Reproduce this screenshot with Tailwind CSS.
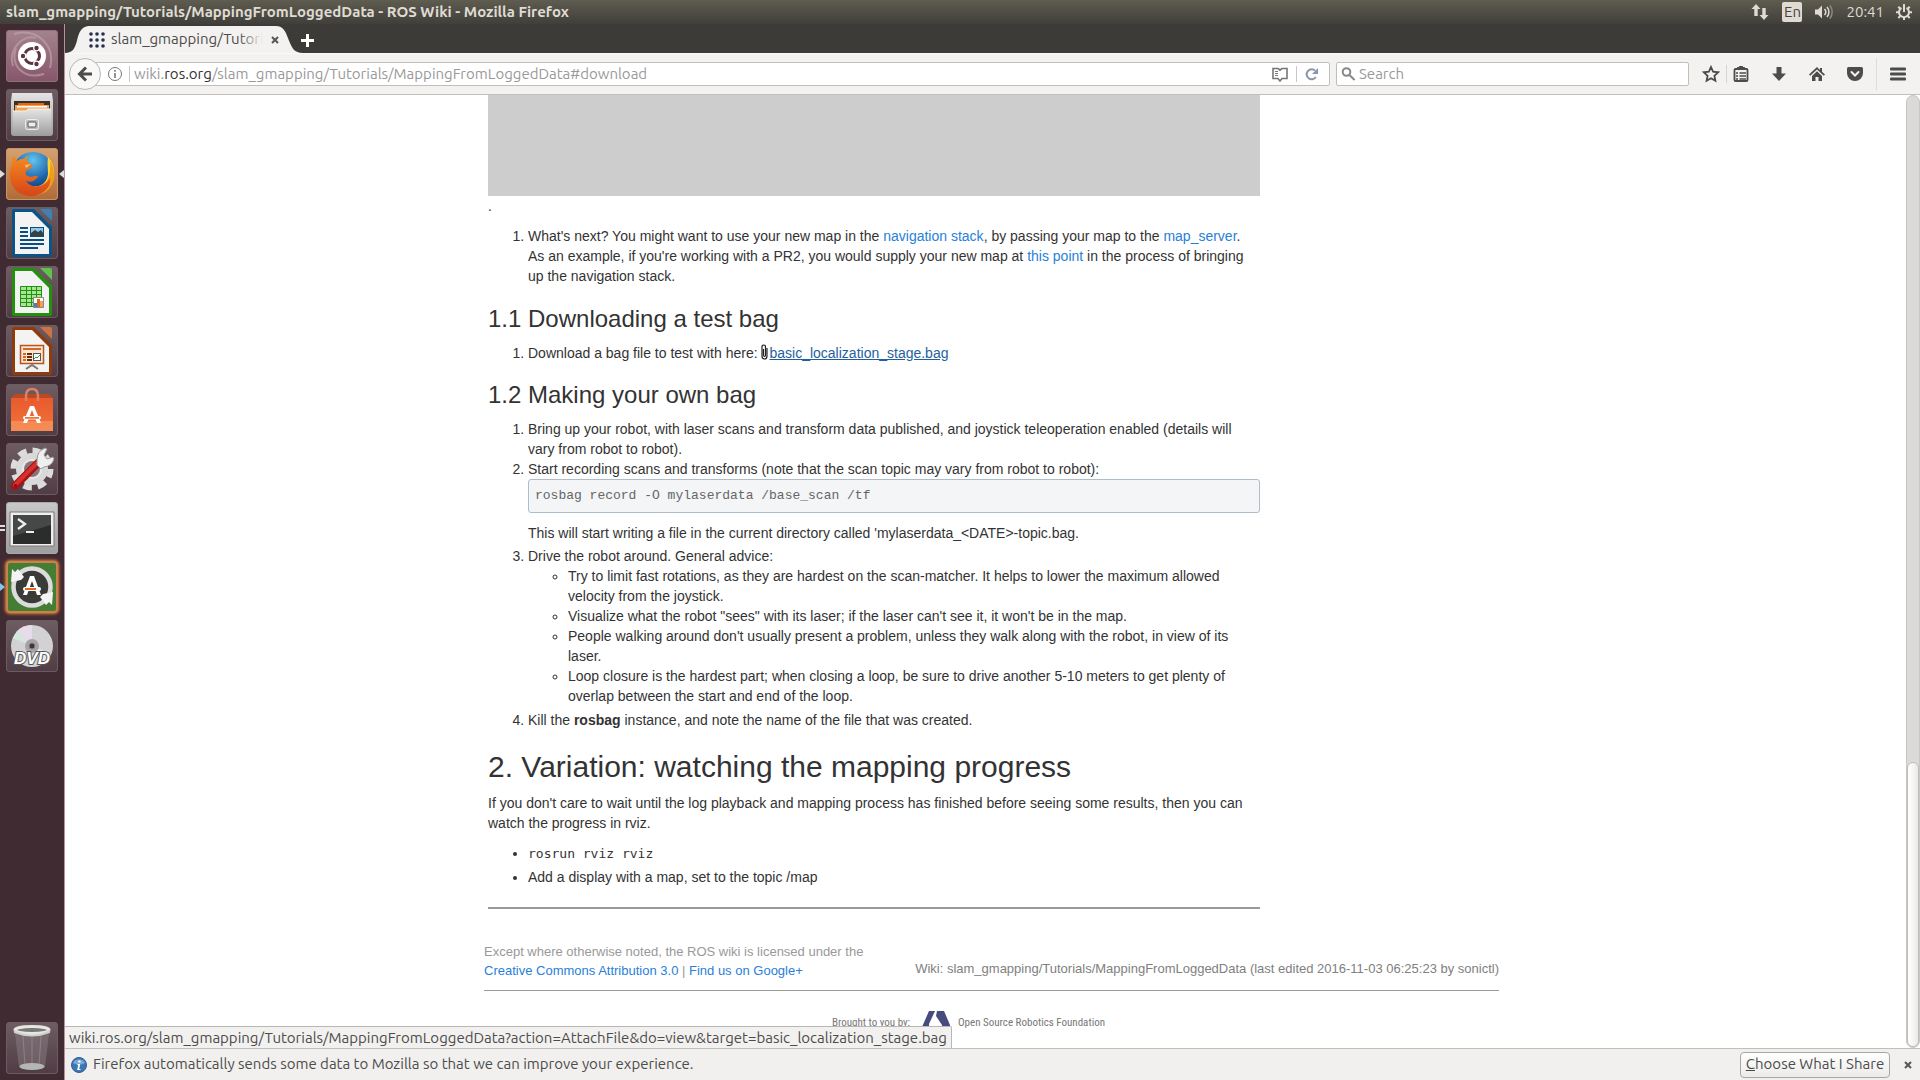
<!DOCTYPE html>
<html lang="en">
<head>
<meta charset="utf-8">
<title>slam_gmapping/Tutorials/MappingFromLoggedData - ROS Wiki</title>
<script src="https://cdn.jsdelivr.net/npm/@tailwindcss/browser@4"></script>
</head>
<body class="flex h-screen flex-col overflow-hidden bg-white font-['Ubuntu','Noto_Sans',sans-serif] text-[15px] text-[#4c4c4c]">

<!-- System panel -->
<header class="flex h-6 shrink-0 items-center justify-between bg-linear-to-b from-[#5f5c50] to-[#403f3a] pr-2 pl-1.5 text-[#dfdbd2]">
  <h1 class="font-bold whitespace-nowrap">slam_gmapping/Tutorials/MappingFromLoggedData - ROS Wiki - Mozilla Firefox</h1>
  <div class="flex items-center gap-3">
    <svg class="h-5 w-5" viewBox="0 0 20 20" fill="#dfdbd2" aria-label="Network"><path d="M6 2 10.500 7H7.700V14H4.300V7H1.500zM14 18 9.500 13H12.300V6H15.700V13H18.500z"/></svg>
    <span class="flex h-5 w-5 items-center justify-center rounded-xs bg-[#dfdbd2] text-[#45443f]">En</span>
    <svg class="h-5 w-5" viewBox="0 0 20 20" fill="none" stroke="#dfdbd2" stroke-width="1.500" aria-label="Sound"><path d="M1 7.500h3l4-4v13l-4-4H1z" fill="#dfdbd2" stroke="none"/><path d="M10.500 7a4.500 4.500 0 0 1 0 6M13 5a7.500 7.500 0 0 1 0 10"/><path d="M15.700 3.200a10.500 10.500 0 0 1 0 13.600" stroke="#8b887f"/></svg>
    <span>20:41</span>
    <svg class="h-4 w-4" viewBox="0 0 16 16" fill="none" stroke="#dfdbd2" stroke-width="2" aria-label="Session"><path d="M5.500 3.900A5 5 0 1 0 10.500 3.900"/><path d="M8 0v8M0 8.300h3M13 8.300h3M2.300 2.800l2 2M13.700 2.800l-2 2M2.300 14l2-2M13.700 14l-2-2M8 13v3"/></svg>
  </div>
</header>

<div class="flex min-h-0 flex-1">

<!-- Launcher -->
<nav class="flex w-[65px] shrink-0 flex-col border-r border-[#b9919c] bg-[#402b33] py-1.5 pl-1.5" aria-label="Launcher">
  <div class="flex flex-1 flex-col gap-[7px]">
    <button aria-label="Dash" class="h-[52px] w-[52px] rounded bg-linear-to-b from-[#a3848e] to-[#86566a] ring-1 ring-[#8f6f7b] ring-inset">
      <svg viewBox="0 0 52 52"><g fill="none" stroke="#c4a7b1" stroke-opacity=".6" stroke-width="2"><path d="M8 4c22-6 42 10 36 34M10 18c-6 18 8 32 28 26M7 36C2 20 16 4 30 8"/></g><circle cx="26" cy="26" r="14" fill="#fff"/><circle cx="26" cy="26" r="7.500" fill="none" stroke="#5b3443" stroke-width="3"/><g fill="#5b3443" stroke="#fff" stroke-width="1.200"><circle cx="17" cy="26" r="2.800"/><circle cx="30.500" cy="18" r="2.800"/><circle cx="30.500" cy="34" r="2.800"/></g></svg>
    </button>
    <button aria-label="Files" class="h-[52px] w-[52px] rounded bg-linear-to-b from-[#6f5d64] to-[#4f3c44] ring-1 ring-[#6d5b62] ring-inset">
      <svg viewBox="0 0 52 52"><defs><linearGradient id="cab" x2="0" y2="1"><stop stop-color="#e4e4e4"/><stop offset="1" stop-color="#9c9c9c"/></linearGradient></defs><path d="M6 4h40l1 8v32q0 3-3 3H8q-3 0-3-3V12z" fill="url(#cab)"/><path d="M8 12h36v12H8z" fill="#39312c"/><path d="M12 14h26v4H12z" fill="#e2661d"/><path d="M9 16h34v6H9z" fill="#f3a24b"/><path d="M11 17h30v1.500H11z" fill="#fff"/><path d="M7 22h13l2-2h23v25q0 2-2 2H9q-2 0-2-2z" fill="url(#cab)"/><path d="M7 22h13l2-2h23" fill="none" stroke="#f2f2f2"/><rect x="19.500" y="30.500" width="13" height="10" rx="2" fill="#b9b9b9" stroke="#eee"/><rect x="22" y="33" width="8" height="5" rx="1" fill="#eee" stroke="#555"/></svg>
    </button>
    <div class="relative">
      <button aria-label="Firefox" class="block h-[52px] w-[52px] rounded bg-linear-to-b from-[#d6a272] to-[#b06b36] ring-1 ring-[#c69469] ring-inset">
        <svg viewBox="0 0 52 52"><defs><radialGradient id="globe" cx=".5" cy=".2" r=".8"><stop stop-color="#62c4ee"/><stop offset=".6" stop-color="#1a5fa8"/><stop offset="1" stop-color="#10305f"/></radialGradient><linearGradient id="fox" x2="0" y2="1"><stop stop-color="#f28b1f"/><stop offset="1" stop-color="#d8441a"/></linearGradient></defs><circle cx="27" cy="25" r="21" fill="url(#globe)"/><path d="M42 9c8 9 8 22 2 30-6 8-18 9-24 5l8-6c8 1 13-4 14-12 0-6-1-11 0-17z" fill="#fbd32c"/><path d="M44 13c6 10 5 20-1 28-4 4-8 5-12 6l4-8c8-5 10-14 9-26z" fill="#f39a1e"/><path d="M6 14c0-3 1-5 2-6l3 5c3-2 5-2 7-2 1-2 3-3 4-3-2 3-1 5 2 8l3 1c-1 3-4 4-6 5-2 2-2 5 1 6 3 2 7-1 10 0-2 5-7 7-12 5 5 8 18 7 24-3 2 9-8 18-19 18C12 48 3 38 4 26c0-5 2-8 2-12z" fill="url(#fox)"/><path d="M19 17l6-1-5 4z" fill="#f6c08c"/></svg>
      </button>
      <svg class="absolute top-[22px] -left-1.5 h-2 w-[5px]" viewBox="0 0 5 8" fill="#dedede"><path d="M0 0 5 4 0 8z"/></svg>
      <svg class="absolute top-[22px] right-0 h-2 w-[5px]" viewBox="0 0 5 8" fill="#dedede"><path d="M5 0 0 4 5 8z"/></svg>
    </div>
    <button aria-label="Writer" class="h-[52px] w-[52px] rounded bg-linear-to-b from-[#6f5d64] to-[#4f3c44] ring-1 ring-[#6d5b62] ring-inset">
      <svg viewBox="0 0 52 52"><path d="M8 2h20l18 18v28q0 2-2 2H8q-2 0-2-2V4q0-2 2-2z" fill="#0b5487"/><path d="M9 5h17l17 17v25H9z" fill="#f3f3f3"/><path d="M34 2h10q2 0 2 2v10z" fill="#3c82b5"/><g fill="#0b4f80"><path d="M14 20h8v2h-8zM14 24h8v2h-8zM14 28h8v2h-8zM14 32h24v2H14zM14 36h24v2H14zM14 40h18v2H14z"/></g><rect x="24.500" y="20.500" width="13" height="9" fill="#8fc8ec" stroke="#0b4f80"/><path d="M25 29v-3l4-3 3 2 3-2 2 3v3z" fill="#36423f"/></svg>
    </button>
    <button aria-label="Calc" class="h-[52px] w-[52px] rounded bg-linear-to-b from-[#6f5d64] to-[#4f3c44] ring-1 ring-[#6d5b62] ring-inset">
      <svg viewBox="0 0 52 52"><path d="M8 2h20l18 18v28q0 2-2 2H8q-2 0-2-2V4q0-2 2-2z" fill="#23900f"/><path d="M9 5h17l17 17v25H9z" fill="#f3f3f3"/><path d="M34 2h10q2 0 2 2v10z" fill="#5ec24c"/><path d="M14.500 20.500h21v20h-21z" fill="#a6e594" stroke="#23900f"/><path d="M14 24.500h22M14 28.500h22M14 32.500h22M14 36.500h22M20.500 20v21M25.500 20v21M30.500 20v21" stroke="#23900f"/><path d="M27.500 31.500h10v10h-10z" fill="#fff" stroke="#888"/><path d="M28 37h3v4h-3z" fill="#3c82c5"/><path d="M31 33h3v8h-3z" fill="#e2661d"/><path d="M34 35h3v6h-3z" fill="#f3a24b"/></svg>
    </button>
    <button aria-label="Impress" class="h-[52px] w-[52px] rounded bg-linear-to-b from-[#6f5d64] to-[#4f3c44] ring-1 ring-[#6d5b62] ring-inset">
      <svg viewBox="0 0 52 52"><path d="M8 2h20l18 18v28q0 2-2 2H8q-2 0-2-2V4q0-2 2-2z" fill="#8f3b0b"/><path d="M9 5h17l17 17v25H9z" fill="#f3f3f3"/><path d="M34 2h10q2 0 2 2v10z" fill="#cc7343"/><path d="M14.500 20.500h23v18h-23z" fill="#fbe6d4" stroke="#b3551c" stroke-width="1.500"/><path d="M17 23h18v2H17z" fill="#d5652a"/><path d="M17 28h3v2h-3zM17 31h3v2h-3zM17 34h3v2h-3z" fill="#d5652a"/><path d="M21 28h5v2h-5zM21 31h5v2h-5zM21 34h5v2h-5z" fill="#6b2a08"/><rect x="27.500" y="28.500" width="7" height="7" fill="#fff" stroke="#555"/><path d="M28 34l2-2 1 1 3-3" stroke="#35a13a" fill="none"/><path d="M20 44l6-4 6 4" fill="none" stroke="#777" stroke-width="2"/></svg>
    </button>
    <button aria-label="Software" class="h-[52px] w-[52px] rounded bg-linear-to-b from-[#6f5d64] to-[#4f3c44] ring-1 ring-[#6d5b62] ring-inset">
      <svg viewBox="0 0 52 52"><defs><linearGradient id="bag" x2="0" y2="1"><stop stop-color="#e9592b"/><stop offset="1" stop-color="#f0753f"/></linearGradient></defs><path d="M5 14l4-4h34l4 4z" fill="#b84a26"/><path d="M5 14h42v33H5z" fill="url(#bag)"/><path d="M5 37h42v10H5z" fill="#f68a55"/><path d="M20 17v-5q0-7 6-7t6 7v5" fill="none" stroke="#d98265" stroke-width="2.500"/><path d="M24 22h4l7 17h-4l-5-13-5 13h-4z" fill="#fff"/><rect x="17" y="32" width="18" height="3.500" rx="1.700" fill="#fff"/><rect x="19" y="33" width="14" height="1.800" fill="#f0753f"/></svg>
    </button>
    <button aria-label="System Settings" class="h-[52px] w-[52px] rounded bg-linear-to-b from-[#6f5d64] to-[#4f3c44] ring-1 ring-[#6d5b62] ring-inset">
      <svg viewBox="0 0 52 52"><circle cx="26" cy="26" r="18.500" fill="none" stroke="#dcdcdc" stroke-width="6" stroke-dasharray="8.500 6.030"/><circle cx="26" cy="26" r="13" fill="#e9e9e9" stroke="#d9d9d9" stroke-width="6"/><circle cx="26" cy="26" r="8" fill="#86777d"/><path d="M9 43 32 20" stroke="#a51515" stroke-width="8" stroke-linecap="round"/><path d="M9 42 31 20" stroke="#d8302d" stroke-width="4" stroke-linecap="round"/><circle cx="9.500" cy="42.500" r="1.500" fill="#701010"/><path d="M31 17q0-9 8-12l2 1-3 6 3 4 6-2 1 2q-2 7-10 8l-3 2-4-4z" fill="#efefef" stroke="#999"/></svg>
    </button>
    <div class="relative">
      <button aria-label="Terminal" class="block h-[52px] w-[52px] rounded bg-linear-to-b from-[#c9c9c9] to-[#9d9d9d] ring-1 ring-[#a9a9a9] ring-inset">
        <svg viewBox="0 0 52 52"><path d="M4 10h44v34H4z" fill="#efefef" stroke="#777"/><path d="M7 13h38v29H7z" fill="#2b2d2c"/><path d="M7 13h38v10L7 34z" fill="#454847"/><path d="M12 17l7 5-7 5" fill="none" stroke="#eee" stroke-width="2.300"/><path d="M20 29h8v2h-8z" fill="#eee"/></svg>
      </button>
      <svg class="absolute top-[22px] -left-1.5 h-2 w-[5px]" viewBox="0 0 5 8" fill="#dedede"><path d="M0 1h5v2H0zM0 5h5v2H0z"/></svg>
    </div>
    <div class="relative">
      <button aria-label="Software Updater" class="block h-[52px] w-[52px] rounded bg-[#447d33] shadow-[0_0_3px_1px_#e8803c] ring-2 ring-[#c9824a] ring-inset">
        <svg viewBox="0 0 52 52"><circle cx="26" cy="26" r="17" fill="#3a3a38"/><circle cx="26" cy="26" r="18.500" fill="none" stroke="#dcdcdc" stroke-width="4.500"/><path d="M5 21 6 8l3 3 3-3 6 8-3 3zM47 31l-1 13-3-3-3 3-6-8 3-3z" fill="#f4f4f4"/><path d="M24 15h4l7 19h-4l-5-14-5 14h-4z" fill="#fff"/><rect x="17" y="26" width="18" height="4" rx="2" fill="#fff"/><rect x="19" y="27" width="11" height="2" fill="#e2661d"/></svg>
      </button>
      <svg class="absolute top-[22px] -left-1.5 h-2 w-[5px]" viewBox="0 0 5 8" fill="#7cc9ee"><path d="M0 0 5 4 0 8z"/></svg>
    </div>
    <button aria-label="DVD" class="h-[52px] w-[52px] rounded bg-linear-to-b from-[#6f5d64] to-[#4f3c44] ring-1 ring-[#6d5b62] ring-inset">
      <svg viewBox="0 0 52 52"><circle cx="26" cy="26" r="21" fill="#d2d2d4"/><path d="M26 26 11 11q6-6 15-6z" fill="#e8dcea"/><path d="M26 26 7 18l4-7z" fill="#d3e8dc"/><path d="M26 26 45 34 38 43z" fill="#ececec"/><circle cx="26" cy="26" r="7" fill="#a8a2a5"/><circle cx="26" cy="26" r="3" fill="#45323a" stroke="#888"/><text x="26" y="44" text-anchor="middle" font-family="Liberation Sans" font-size="17" font-weight="700" font-style="italic" fill="#fff" stroke="#555" stroke-width="2" paint-order="stroke">DVD</text></svg>
    </button>
  </div>
  <button aria-label="Trash" class="h-[52px] w-[52px] rounded bg-linear-to-b from-[#6f5d64] to-[#4f3c44] ring-1 ring-[#6d5b62] ring-inset">
    <svg viewBox="0 0 52 52"><path d="M9 12h34l-4 33q-13 5-26 0z" fill="#8c8287" fill-opacity=".45"/><path d="M17 14l2 30M26 14v30M35 14l-2 30" stroke="#a69da1" stroke-opacity=".5"/><ellipse cx="26" cy="44.500" rx="12.500" ry="3.500" fill="#b5b5b1"/><ellipse cx="26" cy="8" rx="17" ry="3.500" fill="#777" stroke="#e6e6e3" stroke-width="3"/><path d="M8 8q18 9 36 0v3q-18 7-36 0z" fill="#d0d0cc"/></svg>
  </button>
</nav>

<!-- Browser window -->
<div class="flex min-w-0 flex-1 flex-col">

  <div class="flex h-[30px] shrink-0 items-end border-b border-[#f9f9f9] bg-[#3c3b37]" role="tablist">
    <div class="relative flex h-[27px] w-[238px] items-center pr-6 pl-6" role="tab" aria-selected="true">
      <svg class="absolute inset-0 h-full w-full" viewBox="0 0 240 27" preserveAspectRatio="none"><path d="M0 27C8 27 10 22 12 15S15 0 26 0H212C222 0 223 8 226 15S231 27 240 27z" fill="#f3f2f0"/></svg>
      <svg class="relative h-4 w-4 shrink-0" viewBox="0 0 16 16" fill="#22314e"><circle cx="2" cy="2" r="1.800"/><circle cx="8" cy="2" r="1.800"/><circle cx="14" cy="2" r="1.800"/><circle cx="2" cy="8" r="1.800"/><circle cx="8" cy="8" r="1.800"/><circle cx="14" cy="8" r="1.800"/><circle cx="2" cy="14" r="1.800"/><circle cx="8" cy="14" r="1.800"/><circle cx="14" cy="14" r="1.800"/></svg>
      <div class="relative ml-1.5 flex-1 overflow-hidden whitespace-nowrap">slam_gmapping/Tutori<span class="absolute inset-y-0 right-0 w-6 bg-linear-to-r from-transparent to-[#f3f2f0]"></span></div>
      <button aria-label="Close tab" class="relative ml-2 h-2 w-2"><svg viewBox="0 0 8 8" stroke="#555" stroke-width="2"><path d="M1 1l6 6M7 1 1 7"/></svg></button>
    </div>
    <button aria-label="New tab" class="-ml-0.5 mb-1.5 h-[13px] w-[13px]"><svg viewBox="0 0 13 13" fill="#fff"><path d="M5 0h3v5h5v3H8v5H5V8H0V5h5z"/></svg></button>
  </div>

  <div class="flex h-[41px] shrink-0 items-center border-b border-[#c1bfbc] bg-[#f3f2f0] pr-3.5">
    <button aria-label="Back" class="relative z-10 ml-1 flex h-8 w-8 shrink-0 items-center justify-center rounded-full border border-[#b8b6b3] bg-[#f9f8f7]"><svg class="h-4 w-4" viewBox="0 0 16 16" fill="none" stroke="#4c4c4c" stroke-width="3"><path d="M15 8H3M9 1.500 2.500 8 9 14.500"/></svg></button>
    <div class="-ml-3 flex h-6 flex-1 items-center rounded-xs border border-[#c1bfbc] bg-white pr-2.5 pl-[17px]">
      <svg class="h-4 w-4 shrink-0" viewBox="0 0 16 16" fill="none" stroke="#777"><circle cx="8" cy="8" r="6.500"/><path d="M8 7v5M8 4v1.800" stroke-width="1.600"/></svg>
      <span class="mr-1 ml-1.5 h-4 w-px bg-[#c8c8c8]"></span>
      <div role="textbox" contenteditable="true" spellcheck="false" aria-label="Address" class="flex-1 overflow-hidden whitespace-nowrap text-[#999]">wiki.<span class="text-[#333]">ros.org</span>/slam_gmapping/Tutorials/MappingFromLoggedData#download</div>
      <button aria-label="Reader view" class="h-4 w-4"><svg viewBox="0 0 16 16" fill="none" stroke="#777" stroke-width="1.600"><path d="M1 2.500h5L8 4l2-1.500h5v10h-5L8 15l-2-2.500H1zM8 4v1"/><path d="M3 5.500h3M3 7.500h3M3 9.500h3" stroke-width="1"/></svg></button>
      <span class="mx-2 h-4 w-px bg-[#c8c8c8]"></span>
      <button aria-label="Reload" class="h-3.5 w-3.5"><svg viewBox="0 0 14 14" fill="none" stroke="#8797a8" stroke-width="2"><path d="M10.800 10A5 5 0 1 1 10 3.500"/><path d="M13 1v6H7z" fill="#8797a8" stroke="none"/></svg></button>
    </div>
    <div class="ml-1.5 flex h-6 w-[353px] shrink-0 items-center rounded-xs border border-[#c1bfbc] bg-white pl-1">
      <svg class="h-3.5 w-3.5" viewBox="0 0 14 14" fill="none" stroke="#888" stroke-width="2"><circle cx="5.500" cy="5" r="3.800"/><path d="M8.500 8l5 5"/></svg>
      <input type="search" aria-label="Search" placeholder="Search" class="ml-1 min-w-0 flex-1 bg-transparent outline-none placeholder:text-[#999]">
    </div>
    <button aria-label="Bookmark" class="ml-[13px] h-[18px] w-[18px] shrink-0"><svg viewBox="0 0 18 18" fill="none" stroke="#4c4c4c" stroke-width="1.800"><path d="M9 2l2.100 4.700 5 .6-3.700 3.500 1 5L9 13.300 4.600 15.800l1-5L1.900 7.300l5-.6z"/></svg></button>
    <span class="ml-1.5 h-[18px] w-px shrink-0 bg-[#d6d4d1]"></span>
    <button aria-label="Bookmarks menu" class="ml-1.5 h-4 w-4 shrink-0"><svg viewBox="0 0 16 16" fill="none" stroke="#4c4c4c" stroke-width="1.800"><rect x="1.500" y="3" width="13" height="12" rx="1"/><path d="M5 3V2h2V1h2v1h2v1z" fill="#4c4c4c"/><path d="M3 7h2M6.500 7H13M3 10h2M6.500 10H13M3 13h2M6.500 13H13" stroke-width="1.400"/></svg></button>
    <button aria-label="Downloads" class="ml-[22px] h-4 w-4 shrink-0"><svg viewBox="0 0 16 16" fill="#4c4c4c"><path d="M5.500 1h5v6.500H15L8 15 1 7.500h4.500z"/></svg></button>
    <button aria-label="Home" class="ml-[22px] h-4 w-4 shrink-0"><svg viewBox="0 0 16 16" fill="#4c4c4c"><path d="M8 1 0 8.500 1.200 9.700 8 3.500l6.800 6.200L16 8.500l-3-2.800V2h-2v1.900z"/><path d="M3 10l5-4.800L13 10v5H9.500v-4h-3v4H3z"/></svg></button>
    <button aria-label="Pocket" class="ml-[22px] h-4 w-4 shrink-0"><svg viewBox="0 0 16 16"><path d="M1.500 1h13Q16 1 16 2.500V7a8 8 0 0 1-16 0V2.500Q0 1 1.500 1z" fill="#4c4c4c"/><path d="M4.500 6 8 9.500 11.500 6" fill="none" stroke="#f3f2f0" stroke-width="2" stroke-linecap="round"/></svg></button>
    <span class="ml-[13px] h-8 w-px shrink-0 bg-[#dedcd9]"></span>
    <button aria-label="Menu" class="ml-[13px] h-4 w-4 shrink-0"><svg viewBox="0 0 16 16" fill="#4c4c4c"><rect y="1.500" width="16" height="3" rx="1"/><rect y="6.500" width="16" height="3" rx="1"/><rect y="11.500" width="16" height="3" rx="1"/></svg></button>
  </div>

  <div class="relative flex min-h-0 flex-1 bg-white">
    <main id="page" class="min-w-0 flex-1 overflow-hidden font-['Liberation_Sans',sans-serif] text-sm leading-5 text-[#333]">
      <div class="mx-auto w-full max-w-[1027px] pl-3">
        <article class="ml-1 w-[772px] max-w-full">
          <div class="h-[101px] bg-[#cdcdcd]"></div>
          <p>.</p>
          <ol class="mt-2.5 list-decimal pl-10">
            <li class="pr-1">What's next? You might want to use your new map in the <a href="#" class="text-[#2980d9]">navigation stack</a>, by passing your map to the <a href="#" class="text-[#2980d9]">map_server</a>. As an example, if you're working with a PR2, you would supply your new map at <a href="#" class="text-[#2980d9]">this point</a> in the process of bringing up the navigation stack.</li>
          </ol>
          <h3 class="mt-[13px] text-2xl leading-10">1.1 Downloading a test bag</h3>
          <ol class="mt-1 list-decimal pl-10">
            <li>Download a bag file to test with here: <svg class="inline h-4 w-[7px] align-[-2px]" viewBox="0 0 7 16" fill="none" stroke="#222" stroke-width="1.200"><path d="M2.500 5v6q0 1.500 1 1.500t1-1.500V3q0-2-1.800-2T1 3v9q0 3 2.500 3T6 12V4"/></svg><a href="#" class="ml-px text-[#1f5f9f] underline">basic_localization_stage.bag</a></li>
          </ol>
          <h3 class="mt-3 text-2xl leading-10">1.2 Making your own bag</h3>
          <ol class="mt-1 list-decimal pl-10">
            <li>Bring up your robot, with laser scans and transform data published, and joystick teleoperation enabled (details will vary from robot to robot).</li>
            <li>Start recording scans and transforms (note that the scan topic may vary from robot to robot):
              <pre class="mb-2.5 rounded-[3px] border border-[#aebdcc] bg-[#f3f5f7] p-1.5 font-['Liberation_Mono',monospace] text-[13px] leading-5 text-[#666]">rosbag record -O mylaserdata /base_scan /tf</pre>
              <p class="mb-[3px]">This will start writing a file in the current directory called 'mylaserdata_&lt;DATE&gt;-topic.bag.</p>
            </li>
            <li>Drive the robot around. General advice:
              <ul class="mb-1 list-[circle] pl-10">
                <li>Try to limit fast rotations, as they are hardest on the scan-matcher. It helps to lower the maximum allowed velocity from the joystick.</li>
                <li>Visualize what the robot "sees" with its laser; if the laser can't see it, it won't be in the map.</li>
                <li>People walking around don't usually present a problem, unless they walk along with the robot, in view of its laser.</li>
                <li>Loop closure is the hardest part; when closing a loop, be sure to drive another 5-10 meters to get plenty of overlap between the start and end of the loop.</li>
              </ul>
            </li>
            <li>Kill the <strong>rosbag</strong> instance, and note the name of the file that was created.</li>
          </ol>
          <h2 class="mt-[17px] text-3xl leading-10">2. Variation: watching the mapping progress</h2>
          <p class="mt-1.5">If you don't care to wait until the log playback and mapping process has finished before seeing some results, then you can watch the progress in rviz.</p>
          <ul class="mt-2.5 list-disc space-y-[3px] pl-10">
            <li><code class="font-['DejaVu_Sans_Mono',monospace] text-[13px]">rosrun rviz rviz</code></li>
            <li>Add a display with a map, set to the topic /map</li>
          </ul>
          <hr class="mt-5 border-t-2 border-[#999]">
        </article>
        <footer class="text-[13px] text-[#999]">
          <div class="flex items-end justify-between border-b border-[#999] pt-[33px] pb-2.5">
            <p class="leading-[19px]">Except where otherwise noted, the ROS wiki is licensed under the<br><a href="#" class="text-[#2980d9]">Creative Commons Attribution 3.0</a> | <a href="#" class="text-[#2980d9]">Find us on Google+</a></p>
            <p class="mb-px text-[#808080]">Wiki: slam_gmapping/Tutorials/MappingFromLoggedData (last edited 2016-11-03 06:25:23 by sonictl)</p>
          </div>
          <div class="mt-5 ml-[348px] flex items-start font-['Ubuntu_Condensed','Roboto_Condensed','Open_Sans_Condensed','Liberation_Sans',sans-serif] text-[11px] leading-6 text-[#777]">
            <span class="w-[90px] whitespace-nowrap">Brought to you by:</span>
            <svg class="h-[30px] w-7" viewBox="0 0 28 30" fill="#474b7d"><path d="M7 0h6L7 13v17L0 26V16zM15 0h7l6 14v14l-8 2V14l-6-9z"/></svg>
            <span class="ml-2 whitespace-nowrap">Open Source Robotics Foundation</span>
          </div>
        </footer>
      </div>
    </main>
    <div class="flex w-3.5 shrink-0 flex-col rounded-full border border-[#c9c7c4] bg-[#dbdad8]" role="scrollbar" aria-label="Page scroll" aria-valuenow="100" aria-controls="page">
      <div class="mt-auto h-[30%] rounded-full border border-[#c0bebb] bg-linear-to-r from-white to-[#ebeae8]"></div>
    </div>
    <div class="absolute bottom-0 left-0 h-[22px] rounded-tr-xs border-t border-r border-[#b9b7b4] bg-[#f2f1ef] px-1 leading-[21px] whitespace-nowrap">wiki.ros.org/slam_gmapping/Tutorials/MappingFromLoggedData?action=AttachFile&amp;do=view&amp;target=basic_localization_stage.bag</div>
  </div>

  <div class="flex h-8 shrink-0 items-center border-t border-[#c1bfbc] bg-[#f1f0ee] pr-2 pl-1.5">
    <svg class="mr-1.5 h-4 w-4" viewBox="0 0 16 16"><circle cx="8" cy="8" r="7.500" fill="#3c78b4" stroke="#2c5f96"/><path d="M2 6a6.500 5.500 0 0 1 12 0q-6 3-12 0z" fill="#7ba9d4"/><path d="M7.300 3.500h2.200v2H7.300zM6.500 7h2.700l-1 5h1.300v1H6.200l1-5h-.900z" fill="#fff"/></svg>
    <p class="flex-1">Firefox automatically sends some data to Mozilla so that we can improve your experience.</p>
    <button class="h-[26px] w-[150px] rounded border border-[#a9a7a4] bg-linear-to-b from-white to-[#ecebe9]"><span class="underline">C</span>hoose What I Share</button>
    <button aria-label="Dismiss" class="ml-3.5 h-2 w-2"><svg viewBox="0 0 8 8" stroke="#555" stroke-width="2"><path d="M1 1l6 6M7 1 1 7"/></svg></button>
  </div>
</div>
</div>
</body>
</html>
